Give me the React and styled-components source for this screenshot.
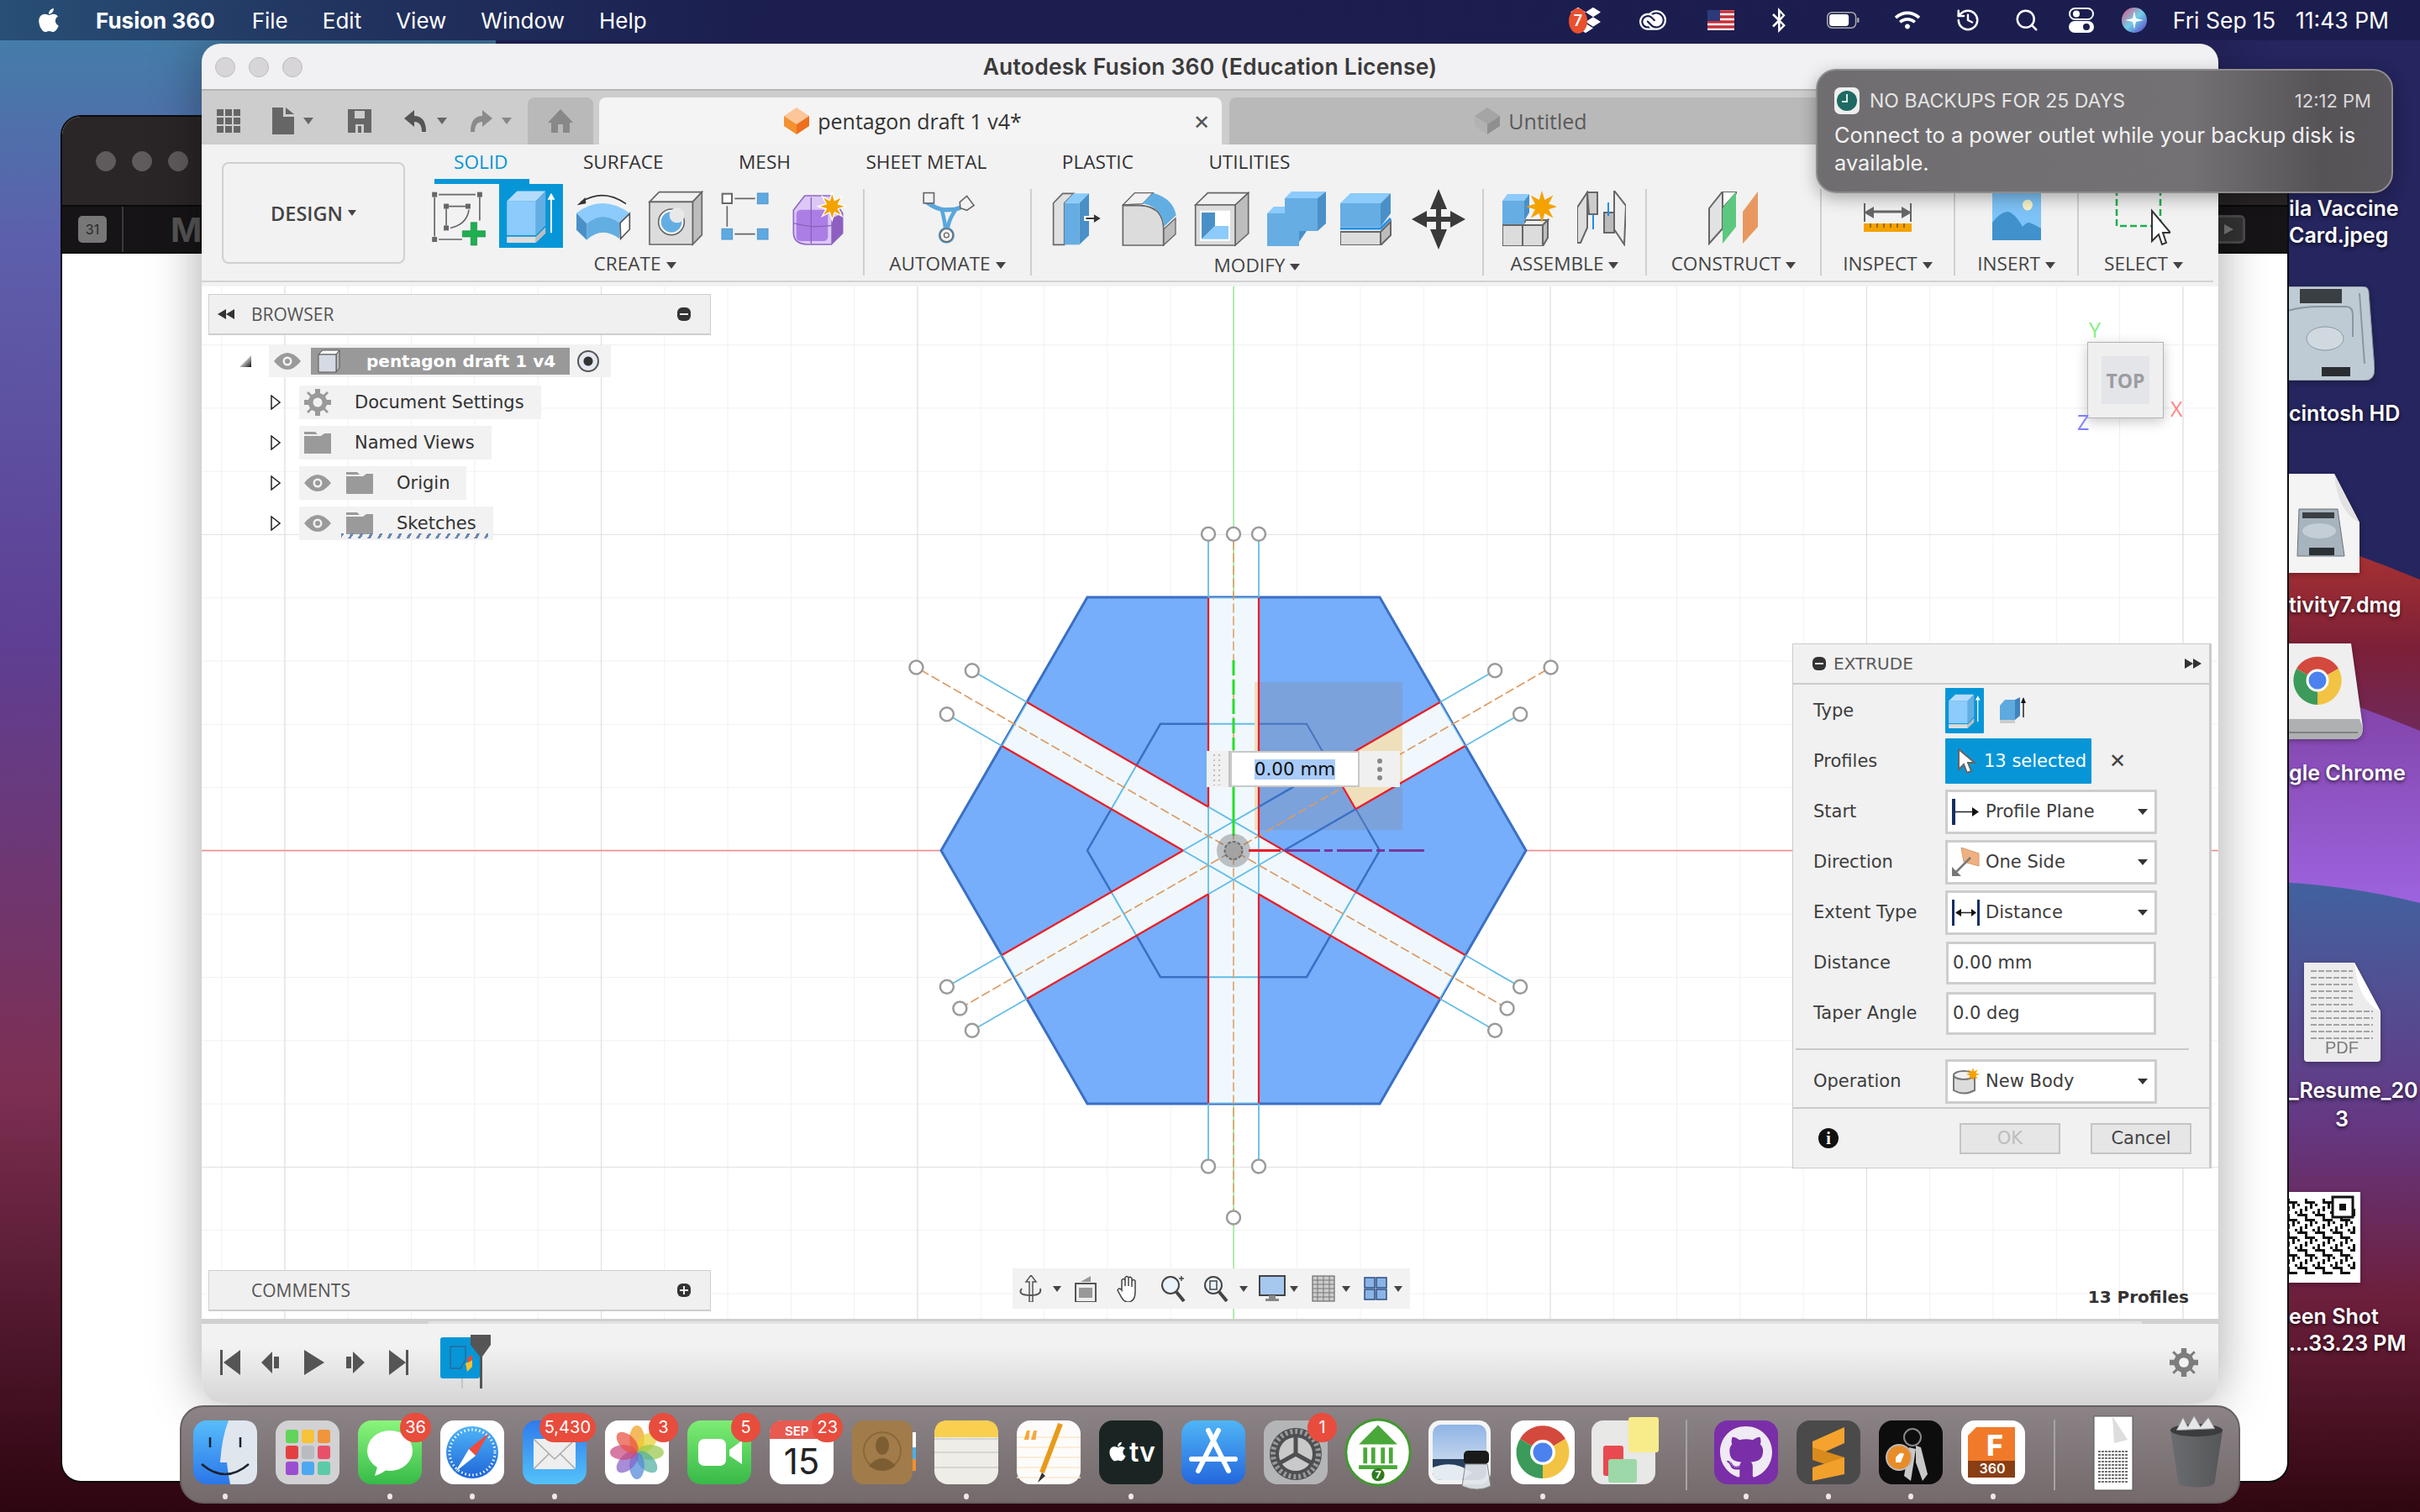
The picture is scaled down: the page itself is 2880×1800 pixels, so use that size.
import React from 'react';
import styled, { createGlobalStyle } from 'styled-components';
import { FaApple, FaDropbox, FaBluetoothB, FaWifi, FaGithub } from 'react-icons/fa';
import { SiAdobecreativecloud } from 'react-icons/si';
import { History, Search } from 'lucide-react';

const CX = 1468;
const CY = 1012.5;
const BLUE = '#3a6fc4';
const SKY = '#63bde6';
const RED = '#ee1c25';

// point on an arm of the sketch: angle in degrees, distance along it, offset from its axis
const pt = (deg, along, off = 0) => {
  const a = (deg * Math.PI) / 180;
  return [CX + along * Math.cos(a) - off * Math.sin(a), CY - along * Math.sin(a) - off * Math.cos(a)];
};
const poly = (points) => points.map((p) => p.map((v) => v.toFixed(1)).join(',')).join(' ');
const hexPoints = (r) => poly([0, 60, 120, 180, 240, 300].map((d) => pt(d, r)));

const Seg = ({ deg, from, to, off = 0, ...rest }) => {
  const [x1, y1] = pt(deg, from, off);
  const [x2, y2] = pt(deg, to, off);
  return <line x1={x1} y1={y1} x2={x2} y2={y2} {...rest} />;
};

const Handle = ({ deg, along, off = 0 }) => {
  const [cx, cy] = pt(deg, along, off);
  return <circle cx={cx} cy={cy} r="8" fill="#fff" stroke="#9b9b9b" strokeWidth="2.5" />;
};

const SketchDrawing = () => {
  const stripA = poly([pt(90, 301, 30), pt(90, 301, -30), pt(270, 301, 30), pt(270, 301, -30)]);
  const stripB = poly([pt(150, 301, 30), pt(150, 301, -30), pt(330, 301, 30), pt(330, 301, -30)]);
  const stripC = poly([pt(210, 301, 30), pt(210, 301, -30), pt(30, 52, 30), pt(30, 17.3, -30)]);
  const outerTR = poly([pt(30, 150.5, 30), pt(30, 301, 30), pt(30, 301, -30), pt(30, 150.5, -30)]);
  const cutA = pt(30, 150.5, -30);
  const cutB = pt(30, 150.5, 30);
  const strips = (
    <>
      <polygon points={stripA} />
      <polygon points={stripB} />
      <polygon points={stripC} />
      <polygon points={outerTR} />
    </>
  );
  const redProps = { stroke: RED, strokeWidth: 2.2 };
  const dash = { stroke: '#dd9a62', strokeWidth: 1.5, strokeDasharray: '11 4' };
  return (
    <SketchSvg viewBox="240 341 2400 1229">
      <defs>
        <clipPath id="stripClip">{strips}</clipPath>
        <clipPath id="boxClip">
          <rect x="1493" y="812" width="176" height="176" />
        </clipPath>
      </defs>
      <line x1="240" y1={CY} x2="2640" y2={CY} stroke="#f58a8a" strokeWidth="1.5" />
      <line x1={CX} y1="341" x2={CX} y2="1570" stroke="#9aee9a" strokeWidth="1.5" />
      <polygon points={hexPoints(348)} fill="#76aefb" stroke={BLUE} strokeWidth="3" />
      <polygon points={hexPoints(174)} fill="none" stroke={BLUE} strokeWidth="2.5" />
      <g fill="#f0f8fe">{strips}</g>
      <g clipPath="url(#stripClip)" fill="none" stroke={SKY} strokeWidth="2">
        <polygon points={hexPoints(174)} />
        <polygon points={hexPoints(348)} strokeWidth="3" />
      </g>
      <rect x="1493" y="812" width="176" height="176" fill="#7ba2db" />
      <g clipPath="url(#boxClip)">
        <polygon points={hexPoints(174)} fill="none" stroke="#4a74bd" strokeWidth="2" />
        <rect x="1493" y="812" width="5" height="176" fill="#efe0bb" />
        <polygon points={outerTR} fill="#efe0bb" />
      </g>
      {[90, 150, 210].map((deg) =>
        [-30, 30].map((off) => (
          <Seg key={deg + off} deg={deg} from={-376.6} to={376.6} off={off} stroke={SKY} strokeWidth="1.8" />
        ))
      )}
      <Seg deg={90} from={-437} to={376} {...dash} />
      <Seg deg={150} from={-376} to={436} {...dash} />
      <Seg deg={30} from={-376} to={436} {...dash} />
      <Seg deg={90} from={52} to={301} off={30} {...redProps} />
      <Seg deg={90} from={17.3} to={301} off={-30} {...redProps} />
      <Seg deg={270} from={52} to={301} off={30} {...redProps} />
      <Seg deg={270} from={52} to={301} off={-30} {...redProps} />
      <Seg deg={150} from={52} to={301} off={30} {...redProps} />
      <Seg deg={150} from={52} to={301} off={-30} {...redProps} />
      <Seg deg={210} from={52} to={301} off={30} {...redProps} />
      <Seg deg={210} from={52} to={301} off={-30} {...redProps} />
      <Seg deg={330} from={52} to={301} off={-30} {...redProps} />
      <Seg deg={330} from={17.3} to={301} off={30} {...redProps} />
      <Seg deg={30} from={150.5} to={301} off={30} {...redProps} />
      <Seg deg={30} from={150.5} to={301} off={-30} {...redProps} />
      <line x1={cutA[0]} y1={cutA[1]} x2={cutB[0]} y2={cutB[1]} {...redProps} />
      <Seg deg={30} from={52} to={150.5} off={30} stroke={BLUE} strokeWidth="2.5" />
      <Seg deg={30} from={52} to={150.5} off={-30} stroke={BLUE} strokeWidth="2.5" />
      <line x1={CX} y1="786" x2={CX} y2="893" stroke="#26e026" strokeWidth="3" strokeDasharray="18 5" />
      <line x1={CX} y1="937" x2={CX} y2="995" stroke="#26e026" strokeWidth="3" />
      <line x1="1486" y1={CY} x2="1524" y2={CY} stroke={RED} strokeWidth="3" />
      <line x1="1529" y1={CY} x2="1695" y2={CY} stroke="#77379e" strokeWidth="3" strokeDasharray="42 5 10 5" />
      <circle cx={CX} cy={CY} r="20" fill="#6a6a6a" fillOpacity=".4" />
      <circle cx={CX} cy={CY} r="10.5" fill="#a3a3a3" stroke="#6b6b6b" strokeWidth="2" strokeDasharray="4 2" />
      {[-30, 0, 30].map((x) => (
        <circle key={x} cx={CX + x} cy="635.8" r="8" fill="#fff" stroke="#9b9b9b" strokeWidth="2.5" />
      ))}
      <Handle deg={270} along={376} off={30} />
      <Handle deg={270} along={376} off={-30} />
      <Handle deg={270} along={437} />
      <Handle deg={150} along={436} />
      <Handle deg={30} along={436} />
      <Handle deg={210} along={376} />
      <Handle deg={330} along={376} />
      {[150, 30, 210, 330].map((deg) =>
        [-30, 30].map((off) => <Handle key={deg + off} deg={deg} along={376.6} off={off} />)
      )}
    </SketchSvg>
  );
};

/* ribbon icons: coordinates follow a 3x view of the toolbar */
const SketchIcon = () => (
  <svg width="75" height="68" viewBox="30 55 225 205">
    <g stroke="#666" strokeWidth="5" fill="none">
      <path d="M66 72H198M213 80V165M51 82V222M66 233H150M102 114H162M93 123V183M108 192Q168 178 174 126" />
    </g>
    <g fill="#666">
      {[[51, 72], [213, 72], [51, 233], [93, 114], [171, 114], [93, 192]].map(([x, y]) => (
        <rect key={x + y} x={x - 9} y={y - 9} width="18" height="18" />
      ))}
    </g>
    <path d="M181 172h22v30h30v22h-30v30h-22v-30h-30v-22h30z" fill="#1fae50" stroke="#1b8f45" strokeWidth="2" />
  </svg>
);
const ExtrudeCube = ({ size = 64 }) => (
  <svg width={size} height={size} viewBox="296 55 200 200">
    <path d="M306 100H414V227H306Z" fill="#8ccbfb" />
    <path d="M306 100L344 63H450L414 100Z" fill="#b3dcfc" />
    <path d="M414 100L450 63V190L414 227Z" fill="#62aee3" />
    <path d="M306 232H414V255H306Z" fill="#dcdcdc" />
    <path d="M414 232L450 197V220L414 255Z" fill="#bdbdbd" />
    <path d="M468 218V95H457L471 70L485 95H474V218Z" fill="#fff" />
  </svg>
);
const RevolveIcon = () => (
  <svg width="68" height="66" viewBox="552 60 204 198">
    <path d="M735 107Q655 50 575 100" fill="none" stroke="#333" strokeWidth="5" />
    <path d="M560 112L590 84L592 106Z" fill="#333" />
    <path d="M558 140Q650 70 748 140L712 175Q650 130 595 178Z" fill="#8ccbfb" />
    <path d="M595 178Q650 130 712 175V232Q650 185 595 236Z" fill="#62aee3" />
    <path d="M558 140L595 178V236L558 200Z" fill="#4a90c8" />
    <path d="M714 175L748 142V198L716 232Z" fill="#fff" stroke="#555" strokeWidth="5" />
  </svg>
);
const HoleIcon = () => (
  <svg width="66" height="66" viewBox="812 60 198 198">
    <path d="M818 100L852 65H1005L972 100Z" fill="#f1f1f1" stroke="#666" strokeWidth="5" />
    <path d="M972 100L1005 65V218L972 252Z" fill="#bdbdbd" stroke="#666" strokeWidth="5" />
    <path d="M818 100H972V252H818Z" fill="#dcdcdc" stroke="#666" strokeWidth="5" />
    <circle cx="896" cy="172" r="46" fill="#fff" stroke="#666" strokeWidth="5" />
    <circle cx="896" cy="172" r="37" fill="#62aee3" />
    <circle cx="916" cy="148" r="27" fill="#e8e8e8" />
  </svg>
);
const PatternIcon = () => (
  <svg width="60" height="64" viewBox="1070 70 180 192">
    <path d="M1122 95H1195M1095 122V195M1122 222H1195" stroke="#666" strokeWidth="5" />
    <rect x="1078" y="78" width="34" height="34" fill="#fff" stroke="#666" strokeWidth="6" />
    {[[1203, 76], [1076, 203], [1203, 203]].map(([x, y]) => (
      <rect key={x + y} x={x} y={y} width="38" height="38" fill="#5eaae0" stroke="#4d93cc" strokeWidth="3" />
    ))}
  </svg>
);
const Burst = ({ cx, cy, r = 48, border = '#fff' }) => {
  const points = Array.from({ length: 16 }, (_, i) => {
    const a = (i * Math.PI) / 8;
    const d = i % 2 ? r * 0.46 : r;
    return [cx + d * Math.sin(a), cy - d * Math.cos(a)];
  });
  return <polygon points={poly(points)} fill="#f4a200" stroke={border} strokeWidth="4" />;
};
const FormIcon = () => (
  <svg width="66" height="66" viewBox="1328 60 198 198">
    <path d="M1335 130L1375 78H1470L1510 140V212L1470 252H1385Q1335 250 1335 210Z" fill="#dcc8f7" stroke="#9066c4" strokeWidth="5" />
    <path d="M1345 146Q1345 128 1363 128H1440Q1458 128 1458 146V222Q1458 240 1440 240H1363Q1345 240 1345 222Z" fill="#ab7ee6" />
    <path d="M1470 160L1510 140V212L1470 250Z" fill="#8e5fc0" />
    <path d="M1398 84V250M1335 176Q1420 200 1510 176" fill="none" stroke="#8a62b8" strokeWidth="4" />
    <Burst cx={1473} cy={116} r={50} />
  </svg>
);
const AutomateIcon = () => (
  <svg width="66" height="66" viewBox="158 58 204 204">
    <path d="M182 100Q225 132 262 128Q305 130 328 104" fill="none" stroke="#5aa6dc" strokeWidth="16" />
    <path d="M238 128Q250 175 252 205M290 126Q262 165 258 205" fill="none" stroke="#5aa6dc" strokeWidth="14" />
    <rect x="171" y="66" width="38" height="38" fill="#f2f2f2" stroke="#666" strokeWidth="5" />
    <path d="M304 100L330 78L356 112L330 130L306 122Z" fill="#f2f2f2" stroke="#666" strokeWidth="5" />
    <circle cx="255" cy="222" r="30" fill="#5aa6dc" />
    <circle cx="255" cy="222" r="24" fill="#f2f2f2" stroke="#666" strokeWidth="5" />
    <circle cx="255" cy="222" r="9" fill="none" stroke="#666" strokeWidth="4" />
  </svg>
);
const PressPullIcon = () => (
  <svg width="60" height="66" viewBox="630 60 184 198">
    <path d="M638 100L672 65H712L678 100V252H638Z" fill="#e0e0e0" stroke="#666" strokeWidth="5" />
    <path d="M678 100H733V252H678Z" fill="#66ade3" />
    <path d="M678 100L712 65H768L733 100Z" fill="#8ccbfb" />
    <path d="M733 100L768 65V218L733 252Z" fill="#4a90c8" />
    <rect x="750" y="147" width="40" height="18" fill="#fff" />
    <path d="M757 156H790" stroke="#333" strokeWidth="6" />
    <path d="M786 141L810 156L786 171Z" fill="#333" />
  </svg>
);
const FilletIcon = () => (
  <svg width="66" height="66" viewBox="886 60 198 198">
    <path d="M1035 195L1078 155V212L1035 252Z" fill="#bdbdbd" stroke="#666" strokeWidth="4" />
    <path d="M890 108L932 65H998L960 104Z" fill="#f1f1f1" stroke="#666" strokeWidth="4" />
    <path d="M890 110H950Q1032 112 1035 190V252H890Z" fill="#dcdcdc" stroke="#666" strokeWidth="5" />
    <path d="M960 102L998 65Q1070 85 1080 145L1037 185Q1030 115 960 102Z" fill="#62aee3" />
  </svg>
);
const ShellIcon = () => (
  <svg width="66" height="66" viewBox="1143 60 198 198">
    <path d="M1148 108L1192 65H1337L1290 108Z" fill="#f1f1f1" stroke="#666" strokeWidth="5" />
    <path d="M1290 108L1337 65V210L1290 252Z" fill="#bdbdbd" stroke="#666" strokeWidth="5" />
    <path d="M1148 108H1290V252H1148Z" fill="#dcdcdc" stroke="#666" strokeWidth="5" />
    <rect x="1164" y="128" width="108" height="108" fill="#fff" />
    <path d="M1170 135H1218V183L1170 230Z" fill="#4a90c8" />
    <path d="M1218 183H1266V230H1170Z" fill="#8ccbfb" />
  </svg>
);
const CombineIcon = () => (
  <svg width="72" height="66" viewBox="0 0 72 66">
    <path d="M0 26H21V8H60V47H38V65H0Z" fill="#66ade3" />
    <path d="M0 26L8 18H21V26ZM21 8L29 0H70L60 8Z" fill="#8ccbfb" />
    <path d="M60 8L70 0V38L60 47ZM38 47H47L38 60Z" fill="#4a90c8" />
  </svg>
);
const StackIcon = () => (
  <svg width="62" height="62" viewBox="0 0 62 62">
    <path d="M0 12H48V40H0Z" fill="#66ade3" />
    <path d="M0 12L12 0H60L48 12Z" fill="#8ccbfb" />
    <path d="M48 12L60 0V24L48 40Z" fill="#4a90c8" />
    <path d="M0 42H48L60 30" fill="none" stroke="#1e90e8" strokeWidth="3" />
    <path d="M0 46H48V62H0Z" fill="#dcdcdc" stroke="#666" strokeWidth="2" />
    <path d="M48 46L60 34V50L48 62Z" fill="#bdbdbd" stroke="#666" strokeWidth="2" />
  </svg>
);
const MoveIcon = () => (
  <svg width="64" height="72" viewBox="0 0 64 72">
    <path d="M32 0L42 24H35V33H46V26L64 36L46 46V39H35V48H42L32 72L22 48H29V39H18V46L0 36L18 26V33H29V24H22Z" fill="#3a3a3a" />
  </svg>
);
const NewComponentIcon = () => (
  <svg width="64" height="66" viewBox="0 0 64 66">
    <path d="M0 41H24V66H0ZM24 41H48V66H24Z" fill="#dcdcdc" stroke="#666" strokeWidth="2" />
    <path d="M24 41L28 35H54L48 41Z" fill="#f1f1f1" stroke="#666" strokeWidth="2" />
    <path d="M48 41L54 35V56L48 66Z" fill="#bdbdbd" stroke="#666" strokeWidth="2" />
    <path d="M0 12H26V40H0Z" fill="#66ade3" />
    <path d="M0 12L6 4H32L26 12Z" fill="#8ccbfb" />
    <path d="M26 12L32 4V26L26 36Z" fill="#4a90c8" />
    <Burst cx={47} cy={19} r={19} border="none" />
  </svg>
);
const JointIcon = () => (
  <svg width="58" height="66" viewBox="0 0 58 66">
    <path d="M0 20L12 2V44L4 62H0Z" fill="#ddd" stroke="#666" strokeWidth="2" />
    <path d="M12 2H24V28H14Z" fill="#ccc" stroke="#666" strokeWidth="2" />
    <path d="M58 18L44 0V46L56 64Z" fill="#eee" stroke="#666" strokeWidth="2" />
    <path d="M32 26H44V50H32Z" fill="#bbb" stroke="#666" strokeWidth="2" />
    <path d="M37 14V30M19 28V46" stroke="#1e90e8" strokeWidth="2" />
  </svg>
);
const PlaneIcon = () => (
  <svg width="62" height="64" viewBox="0 0 62 64">
    <path d="M2 20L18 0V44L2 62Z" fill="#e2e2e2" stroke="#666" strokeWidth="2" />
    <path d="M18 0H34V2L18 20Z" fill="#fff" stroke="#666" strokeWidth="2" />
    <path d="M18 20L34 0V42L18 62Z" fill="#5cc87f" />
    <path d="M42 24L60 0V42L42 62Z" fill="#e8985f" />
  </svg>
);
const MeasureIcon = () => (
  <svg width="58" height="34" viewBox="0 0 58 34">
    <path d="M1 0V22M56 0V22" stroke="#666" strokeWidth="2" />
    <path d="M8 10H50" stroke="#666" strokeWidth="3" />
    <path d="M0 11L12 4V18ZM57 11L45 4V18Z" fill="#666" />
    <rect x="0" y="24" width="57" height="10" fill="#f4a200" />
    <path d="M8 24V29M16 24V29M24 24V29M32 24V29M40 24V29M48 24V29" stroke="#7a5a10" strokeWidth="1.5" />
  </svg>
);
const PictureIcon = () => (
  <svg width="58" height="61" viewBox="0 0 58 61">
    <rect width="58" height="61" fill="#7dc3f7" />
    <ellipse cx="42" cy="19" rx="6" ry="6.5" fill="#f8f4c8" />
    <path d="M0 40Q10 27 19 27Q28 30 36 45Q40 40 44 40Q50 42 58 47V61H0Z" fill="#4192cc" />
  </svg>
);
const SelectIcon = () => (
  <svg width="66" height="66" viewBox="0 0 66 66">
    <rect x="2" y="-10" width="52" height="52" fill="none" stroke="#1fae50" strokeWidth="2.5" strokeDasharray="8 4" />
    <path d="M44 24V60L52 52L56 64L61 62L57 50H66Z" fill="#fff" stroke="#333" strokeWidth="2" />
  </svg>
);

/* toolbar in the tab strip */
const GridGlyph = () => (
  <svg width="28" height="28" viewBox="0 0 28 28" fill="#666">
    {[0, 10, 20].map((x) => [0, 10, 20].map((y) => <rect key={x + y * 3} x={x} y={y} width="8" height="8" />))}
  </svg>
);
const FileGlyph = () => (
  <svg width="26" height="32" viewBox="0 0 26 32">
    <path d="M0 0H13V11H26V32H0ZM16 0L26 8H16Z" fill="#666" />
  </svg>
);
const SaveGlyph = () => (
  <svg width="28" height="28" viewBox="0 0 28 28">
    <path d="M0 0H28V28H0Z" fill="#666" />
    <rect x="8" y="2" width="12" height="9" fill="#cdcdcd" />
    <rect x="9" y="18" width="10" height="10" fill="#cdcdcd" />
    <rect x="12" y="20" width="4" height="8" fill="#666" />
  </svg>
);
const UndoGlyph = ({ $flip, color = '#555' }) => (
  <svg width="28" height="26" viewBox="0 0 28 26" style={$flip ? { transform: 'scaleX(-1)' } : undefined}>
    <path d="M0 10L12 0V7Q26 7 26 26H21Q21 14 12 14V20Z" fill={color} />
  </svg>
);
const HomeGlyph = () => (
  <svg width="30" height="28" viewBox="0 0 30 28">
    <path d="M15 0L30 16H26V28H18V18H12V28H4V16H0Z" fill="#888" />
  </svg>
);
const DocCube = ({ a = '#fcc69a', b = '#f39130', c = '#ee6f1c' }) => (
  <svg width="30" height="32" viewBox="0 0 30 32">
    <path d="M15 0L30 10L15 20L0 10Z" fill={a} />
    <path d="M0 10L15 20V32L0 22Z" fill={b} />
    <path d="M30 10L15 20V32L30 22Z" fill={c} />
  </svg>
);
const Caret = styled.span`
  display: inline-block;
  width: 0;
  height: 0;
  margin-left: ${({ $gap }) => $gap ?? 6}px;
  border-left: ${({ $size }) => $size ?? 6}px solid transparent;
  border-right: ${({ $size }) => $size ?? 6}px solid transparent;
  border-top: ${({ $size }) => ($size ?? 6) + 2}px solid ${({ $color }) => $color ?? '#444'};
`;

/* small browser and panel glyphs */
const Eye = () => (
  <svg width="32" height="20" viewBox="0 0 32 20">
    <path d="M0 10Q16 -10 32 10Q16 30 0 10Z" fill="#9a9a9a" />
    <circle cx="16" cy="10" r="5.5" fill="#f2f2f2" />
    <circle cx="16" cy="10" r="3" fill="#9a9a9a" />
  </svg>
);
const Folder = () => (
  <svg width="32" height="26" viewBox="0 0 32 26">
    <path d="M0 0H13L16 3H0ZM0 5H20L24 2H32V26H0Z" fill="#9a9a9a" />
  </svg>
);
const Gear = ({ size = 32, color = '#9a9a9a' }) => (
  <svg width={size} height={size} viewBox="0 0 32 32">
    <path d="M13 0H19V5L23 7L27 3L29 5L25 9L27 13H32V19H27L25 23L29 27L27 29L23 25L19 27V32H13V27L9 25L5 29L3 27L7 23L5 19H0V13H5L7 9L3 5L5 3L9 7L13 5Z" fill={color} />
    <circle cx="16" cy="16" r="5.5" fill="#f2f2f2" />
  </svg>
);
const TreeArrow = () => (
  <svg width="12" height="18" viewBox="0 0 12 18">
    <path d="M1 1L11 9L1 17Z" fill="#fff" stroke="#222" strokeWidth="1.5" />
  </svg>
);
const Pill = ({ plus }) => (
  <svg width="16" height="16" viewBox="0 0 16 16">
    <rect width="16" height="16" rx="6" fill="#333" />
    <path d={plus ? 'M3 8H13M8 3V13' : 'M3 8H13'} stroke="#eee" strokeWidth="2" />
  </svg>
);
const DoubleArrow = ({ back }) => (
  <svg width="20" height="12" viewBox="0 0 20 12" style={back ? { transform: 'scaleX(-1)' } : undefined}>
    <path d="M0 0L10 6L0 12ZM10 0L20 6L10 12Z" fill="#333" />
  </svg>
);

const StartGlyph = () => (
  <svg width="34" height="31" viewBox="0 0 34 31">
    <rect x="0" width="4" height="31" fill="#152e63" />
    <path d="M4 15.5H26" stroke="#222" strokeWidth="1.5" />
    <path d="M24 10L32 15.5L24 21Z" fill="#111" />
  </svg>
);
const DirectionGlyph = () => (
  <svg width="34" height="34" viewBox="0 0 34 34">
    <path d="M11 0L32 7V22L14 17Z" fill="#eeb081" stroke="#d99a6a" />
    <path d="M2 32L22 12" stroke="#777" strokeWidth="2.5" />
    <path d="M0 34V23L11 34Z" fill="#777" />
  </svg>
);
const DistanceGlyph = () => (
  <svg width="34" height="31" viewBox="0 0 34 31">
    <rect x="0" width="3" height="31" fill="#152e63" />
    <rect x="30" width="3" height="31" fill="#152e63" />
    <path d="M6 15.5H27" stroke="#222" strokeWidth="1.5" />
    <path d="M11 11L4 15.5L11 20ZM23 11L29 15.5L23 20Z" fill="#111" />
  </svg>
);
const BodyGlyph = () => (
  <svg width="34" height="32" viewBox="0 0 34 32">
    <path d="M2 9V27Q14 34 27 27V9" fill="#dcdcdc" stroke="#777" strokeWidth="2" />
    <ellipse cx="14" cy="9" rx="12" ry="5" fill="#f1f1f1" stroke="#777" strokeWidth="2" />
    <Burst cx={25} cy={8} r={8} border="none" />
  </svg>
);
const CursorGlyph = () => (
  <svg width="24" height="30" viewBox="0 0 24 30">
    <path d="M2 1V25L8 19L12 29L17 27L13 17H21Z" fill="#fff" stroke="#666" strokeWidth="2" />
  </svg>
);
const TaperGlyph = () => (
  <svg width="32" height="32" viewBox="0 0 32 32">
    <path d="M0 10L6 3H18V27H6L0 30Z" fill="#5eaae0" />
    <path d="M18 3L24 0V22L18 27Z" fill="#3f83bd" />
    <path d="M0 27H18V31H0Z" fill="#ccc" />
    <path d="M28 24V6" stroke="#222" strokeWidth="1.5" />
    <path d="M25 7L28 0L31 7Z" fill="#111" />
  </svg>
);

/* navigation bar at the bottom of the canvas */
const OrbitGlyph = () => (
  <svg width="30" height="32" viewBox="0 0 30 32">
    <path d="M15 0L21 8H17V32H13V8H9Z" fill="#eee" stroke="#555" strokeWidth="1.5" />
    <path d="M4 16Q-2 24 15 24Q28 24 26 16" fill="none" stroke="#555" strokeWidth="2" />
  </svg>
);
const LookGlyph = () => (
  <svg width="28" height="32" viewBox="0 0 28 32">
    <path d="M2 10H26V32H2Z" fill="#eee" stroke="#555" strokeWidth="2" />
    <rect x="6" y="15" width="16" height="12" fill="#999" />
    <path d="M8 8L20 1V8Z" fill="#999" />
  </svg>
);
const HandGlyph = () => (
  <svg width="30" height="32" viewBox="0 0 30 32">
    <path d="M6 16V6Q8 3 10 6V13V3Q12 0 14 3V13V3Q16 1 18 4V14V7Q20 4 22 7V20Q22 32 13 32Q9 32 6 27L1 18Q3 14 6 18Z" fill="#fff" stroke="#444" strokeWidth="1.5" />
  </svg>
);
const ZoomGlyph = ({ fit }) => (
  <svg width="30" height="32" viewBox="0 0 30 32">
    <circle cx="12" cy="12" r="10" fill="#eaf2fb" stroke="#444" strokeWidth="2" />
    <path d="M19 20L28 31" stroke="#444" strokeWidth="4" />
    {fit ? <rect x="8" y="7" width="8" height="10" fill="none" stroke="#444" strokeWidth="1.5" /> : <path d="M25 1V7M22 4H28" stroke="#444" strokeWidth="1.5" />}
  </svg>
);
const DisplayGlyph = () => (
  <svg width="32" height="32" viewBox="0 0 32 32">
    <rect x="1" y="1" width="30" height="23" fill="#a6c8ee" stroke="#444" strokeWidth="2" />
    <path d="M12 24H20V28H24V31H8V28H12Z" fill="#888" />
  </svg>
);
const GridStackGlyph = () => (
  <svg width="28" height="32" viewBox="0 0 28 32">
    <rect x="1" y="1" width="26" height="30" fill="#ccc" stroke="#555" />
    <path d="M1 6H27M1 11H27M1 16H27M1 21H27M1 26H27M7 1V31M14 1V31M21 1V31" stroke="#777" />
  </svg>
);
const PanesGlyph = () => (
  <svg width="28" height="28" viewBox="0 0 28 28">
    <rect x="1" y="1" width="12" height="12" fill="#8ab4e4" stroke="#2c4f86" strokeWidth="1.5" />
    <rect x="15" y="1" width="12" height="12" fill="#8ab4e4" stroke="#2c4f86" strokeWidth="1.5" />
    <rect x="1" y="15" width="12" height="12" fill="#8ab4e4" stroke="#2c4f86" strokeWidth="1.5" />
    <rect x="15" y="15" width="12" height="12" fill="#8ab4e4" stroke="#2c4f86" strokeWidth="1.5" />
  </svg>
);

/* dock tiles */
const Grad = ({ id, a, b, x2 = 0, y2 = 1 }) => (
  <linearGradient id={id} x1="0" y1="0" x2={x2} y2={y2}>
    <stop offset="0" stopColor={a} />
    <stop offset="1" stopColor={b} />
  </linearGradient>
);
const Tile = ({ children, fill = '#fff' }) => (
  <svg width="76" height="76" viewBox="0 0 76 76">
    <rect width="76" height="76" rx="16" fill={fill} />
    {children}
  </svg>
);
const FinderTile = () => (
  <svg width="76" height="76" viewBox="0 0 76 76">
    <defs><Grad id="fd" a="#58bdfb" b="#2a76e8" /></defs>
    <rect width="76" height="76" rx="16" fill="url(#fd)" />
    <path d="M42 0H60Q76 0 76 16V60Q76 76 60 76H44Q41 60 40 50H32Q34 20 42 0Z" fill="#dfe6ee" />
    <path d="M20 20V32M56 20V32" stroke="#1a2230" strokeWidth="2.5" />
    <path d="M10 52Q38 76 66 52" fill="none" stroke="#1a2230" strokeWidth="2.5" />
  </svg>
);
const LaunchpadTile = () => {
  const colors = ['#62d45a', '#f7c338', '#f0953c', '#e24040', '#b8bcc0', '#e8506a', '#9a4fd0', '#4ca8f0', '#5cc9a8'];
  return (
    <Tile fill="#d2d1d3">
      {colors.map((c, i) => (
        <rect key={c} x={12 + (i % 3) * 19} y={11 + Math.floor(i / 3) * 19} width="15" height="16" rx="3" fill={c} />
      ))}
    </Tile>
  );
};
const MessagesTile = () => (
  <svg width="76" height="76" viewBox="0 0 76 76">
    <defs><Grad id="ms" a="#8af57c" b="#36bb48" /></defs>
    <rect width="76" height="76" rx="16" fill="url(#ms)" />
    <ellipse cx="38" cy="36" rx="27" ry="24" fill="#fff" />
    <path d="M24 52L20 66Q32 62 36 56Z" fill="#fff" />
  </svg>
);
const SafariTile = () => (
  <Tile>
    <defs><Grad id="sf" a="#4fb4f7" b="#1f66d8" /></defs>
    <circle cx="38" cy="38" r="31" fill="url(#sf)" />
    <circle cx="38" cy="38" r="27" fill="none" stroke="#fff" strokeWidth="3" strokeDasharray="1.5 3" />
    <path d="M58 15L34 34L42 42Z" fill="#f04a3a" />
    <path d="M18 61L34 34L42 42Z" fill="#fff" />
  </Tile>
);
const MailTile = () => (
  <svg width="76" height="76" viewBox="0 0 76 76">
    <defs><Grad id="ml" a="#2f7bec" b="#53c2fa" /></defs>
    <rect width="76" height="76" rx="16" fill="url(#ml)" />
    <rect x="13" y="22" width="50" height="36" rx="2" fill="#eee" />
    <path d="M13 22L38 46L63 22M13 58L31 40M63 58L45 40" fill="none" stroke="#aaa" strokeWidth="1.5" />
  </svg>
);
const PhotosTile = () => {
  const petals = ['#f0a020', '#e8d030', '#98c848', '#50b0a0', '#5088d8', '#8860c8', '#c84880', '#e85040'];
  return (
    <Tile>
      {petals.map((c, i) => (
        <ellipse key={c} cx="38" cy="22" rx="9" ry="16" fill={c} fillOpacity=".72" transform={`rotate(${i * 45} 38 38)`} />
      ))}
    </Tile>
  );
};
const FaceTimeTile = () => (
  <svg width="76" height="76" viewBox="0 0 76 76">
    <defs><Grad id="ft" a="#7ded74" b="#38b948" /></defs>
    <rect width="76" height="76" rx="16" fill="url(#ft)" />
    <rect x="13" y="22" width="33" height="32" rx="7" fill="#fff" />
    <path d="M50 35L65 24V52L50 42Z" fill="#fff" />
  </svg>
);
const CalendarTile = () => (
  <Tile>
    <path d="M0 22V16Q0 0 16 0H60Q76 0 76 16V22Z" fill="#e85a50" />
    <TileText x="18" y="18" fontSize="15" fill="#fff" fontWeight="600">SEP</TileText>
    <TileText x="38" y="64" fontSize="42" fill="#222" textAnchor="middle">15</TileText>
  </Tile>
);
const ContactsTile = () => (
  <svg width="76" height="76" viewBox="0 0 76 76">
    <rect x="70" y="14" width="6" height="18" fill="#fff" />
    <rect x="70" y="32" width="6" height="14" fill="#4cb0e8" />
    <rect x="70" y="46" width="6" height="14" fill="#f09030" />
    <rect width="72" height="76" rx="14" fill="#a17c4a" />
    <circle cx="36" cy="36" r="22" fill="none" stroke="#8a6838" strokeWidth="2" />
    <ellipse cx="36" cy="30" rx="8" ry="11" fill="#7d5e32" />
    <path d="M20 54Q36 36 52 54Q36 66 20 54Z" fill="#7d5e32" />
  </svg>
);
const NotesTile = () => (
  <Tile fill="#eeede8">
    <path d="M0 20V16Q0 0 16 0H60Q76 0 76 16V20Z" fill="#f8cf4f" />
    <path d="M0 22H76" stroke="#bbb" strokeDasharray="1 1" strokeWidth="2" />
    <path d="M0 38H76M0 56H76" stroke="#d6d6d0" strokeWidth="2" />
  </Tile>
);
const PagesTile = () => (
  <Tile fill="#fdfcfa">
    <path d="M0 20H76M0 32H76M0 44H76M0 56H76M0 68H76" stroke="#fbe6cc" strokeWidth="1.5" />
    <TileText x="6" y="38" fontSize="36" fill="#f3a93a" fontWeight="700">“</TileText>
    <path d="M52 4L30 62" stroke="#e89a1a" strokeWidth="6" />
    <path d="M30 62L25 74L34 66Z" fill="#333" />
  </Tile>
);
const TvTile = () => (
  <Tile fill="#1a2523">
    <FaApple x="9" y="24" size="26" color="#fff" />
    <TileText x="36" y="49" fontSize="32" fill="#fff" fontWeight="600">tv</TileText>
  </Tile>
);
const StoreTile = () => (
  <svg width="76" height="76" viewBox="0 0 76 76">
    <defs><Grad id="as" a="#4fb5f6" b="#2467dd" /></defs>
    <rect width="76" height="76" rx="16" fill="url(#as)" />
    <path d="M44 12L20 60M32 12L56 60M12 46H64" stroke="#fff" strokeWidth="6" strokeLinecap="round" />
  </svg>
);
const PrefsTile = () => (
  <Tile fill="#b4b5b7">
    <circle cx="38" cy="40" r="31" fill="#4e4f52" />
    <circle cx="38" cy="40" r="27" fill="none" stroke="#9a9a9a" strokeWidth="6" strokeDasharray="3 3" />
    <circle cx="38" cy="40" r="20" fill="#c9c9c9" />
    <path d="M38 40V20M38 40L20 50M38 40L56 50" stroke="#4e4f52" strokeWidth="5" />
  </Tile>
);
const BankTile = () => (
  <svg width="80" height="82" viewBox="0 0 84 84">
    <ellipse cx="42" cy="42" rx="40" ry="41" fill="#fff" stroke="#3f9a2e" strokeWidth="3" />
    <path d="M42 8L66 32H18Z" fill="#4aa83a" />
    <path d="M26 36V56M36 36V56M48 36V56M58 36V56" stroke="#4aa83a" strokeWidth="5" />
    <path d="M18 58H66V63H18Z" fill="#4aa83a" />
    <circle cx="42" cy="70" r="8" fill="#2e7a20" />
    <TileText x="42" y="75" fontSize="13" fill="#fff" textAnchor="middle" fontWeight="700">7</TileText>
  </svg>
);
const PreviewTile = () => (
  <svg width="76" height="84" viewBox="0 0 76 84">
    <defs><Grad id="pv" a="#8fb4e6" b="#e0e8f0" /></defs>
    <rect width="74" height="76" rx="14" fill="#f4f4f4" />
    <rect x="5" y="5" width="64" height="66" rx="10" fill="url(#pv)" />
    <path d="M5 46H69V60Q69 71 58 71H16Q5 71 5 60Z" fill="#28405f" />
    <path d="M5 56Q30 46 52 62L40 71H16Q5 71 5 62Z" fill="#e4ecf2" />
    <rect x="42" y="36" width="30" height="16" rx="5" fill="#1a1a1a" />
    <path d="M44 52H70L74 78Q58 86 40 78Z" fill="#dfe5ea" fillOpacity=".92" stroke="#888" />
  </svg>
);
const ChromeTile = () => (
  <Tile>
    <path d="M38 38L11 22A31 31 0 0 1 65 22Z" fill="#d4493e" />
    <path d="M38 38L11 22A31 31 0 0 0 38 69Z" fill="#3c9a5a" />
    <path d="M38 38L38 69A31 31 0 0 0 65 22Z" fill="#f3c343" />
    <circle cx="38" cy="38" r="15" fill="#fff" />
    <circle cx="38" cy="38" r="11.5" fill="#4b82ee" />
  </Tile>
);
const StickiesTile = () => (
  <svg width="80" height="80" viewBox="0 0 80 80">
    <rect y="4" width="76" height="76" rx="14" fill="#e8e8e6" />
    <rect x="14" y="34" width="24" height="36" rx="3" fill="#e84a50" />
    <rect x="20" y="50" width="34" height="28" rx="3" fill="#9cd8a8" />
    <rect x="44" y="0" width="36" height="42" rx="3" fill="#f8ec8a" />
  </svg>
);
const GithubTile = () => (
  <Tile fill="#7a2ea8">
    <FaGithub x="6" y="6" size="64" color="#f0eaf4" />
  </Tile>
);
const SublimeTile = () => (
  <Tile fill="#4a4a4a">
    <path d="M57 8V27L19 44V25Z" fill="#f5a32e" />
    <path d="M19 32L57 44V60L19 47Z" fill="#d98a1c" />
    <path d="M57 44V64L19 72V56Z" fill="#f2a02c" />
  </Tile>
);
const KeysTile = () => (
  <Tile fill="#0d0d0d">
    <circle cx="40" cy="20" r="10" fill="none" stroke="#888" strokeWidth="2" />
    <path d="M44 30L50 32L58 64L52 72L44 50ZM36 32L44 34L38 72L30 66Z" fill="#c8c8c8" />
    <circle cx="24" cy="44" r="15" fill="#e88c2a" stroke="#bbb" strokeWidth="2" />
    <path d="M20 44Q26 36 30 40L26 50H20Z" fill="#fff" />
  </Tile>
);
const FusionTile = () => (
  <Tile>
    <path d="M8 18L18 8H64V48H8Z" fill="#f07a2a" />
    <path d="M8 48H64V68H8Z" fill="#8a3e14" />
    <TileText x="40" y="42" fontSize="34" fill="#fff" fontWeight="800" textAnchor="middle">F</TileText>
    <TileText x="37" y="63" fontSize="16" fill="#fff" fontWeight="600" textAnchor="middle">360</TileText>
  </Tile>
);
const PdfPageTile = () => (
  <svg width="48" height="90" viewBox="0 0 48 90">
    <path d="M0 2H46V90H0Z" fill="#fff" stroke="#555" />
    <path d="M22 2L40 30L24 34Z" fill="#ddd" />
    <g stroke="#444" strokeWidth="1.5" strokeDasharray="3 1">
      {[44, 48, 52, 56, 60, 64, 68, 72, 76, 80].map((y) => <path key={y} d={`M5 ${y}H41`} />)}
    </g>
  </svg>
);
const TrashTile = () => (
  <svg width="66" height="90" viewBox="0 0 70 92">
    <defs><Grad id="tr" a="#6a6d70" b="#555658" x2={1} y2={0} /></defs>
    <path d="M2 18H68L58 84Q56 90 36 90Q14 90 12 84Z" fill="url(#tr)" />
    <ellipse cx="35" cy="18" rx="33" ry="8" fill="#3b3c3e" />
    <path d="M10 18L18 2L24 14L32 0L40 14L50 2L58 16Z" fill="#e4e6ea" stroke="#999" />
  </svg>
);

const DOCK = [
  { id: 'finder', Icon: FinderTile, dot: true },
  { id: 'launchpad', Icon: LaunchpadTile },
  { id: 'messages', Icon: MessagesTile, dot: true, badge: '36' },
  { id: 'safari', Icon: SafariTile, dot: true },
  { id: 'mail', Icon: MailTile, dot: true, badge: '5,430' },
  { id: 'photos', Icon: PhotosTile, badge: '3' },
  { id: 'facetime', Icon: FaceTimeTile, badge: '5' },
  { id: 'calendar', Icon: CalendarTile, badge: '23' },
  { id: 'contacts', Icon: ContactsTile },
  { id: 'notes', Icon: NotesTile, dot: true },
  { id: 'pages', Icon: PagesTile },
  { id: 'tv', Icon: TvTile, dot: true },
  { id: 'store', Icon: StoreTile },
  { id: 'prefs', Icon: PrefsTile, badge: '1' },
  { id: 'bank', Icon: BankTile, lift: 3 },
  { id: 'preview', Icon: PreviewTile },
  { id: 'chrome', Icon: ChromeTile, dot: true },
  { id: 'stickies', Icon: StickiesTile, lift: 4 },
  { sep: true },
  { id: 'github', Icon: GithubTile, dot: true },
  { id: 'sublime', Icon: SublimeTile, dot: true },
  { id: 'keys', Icon: KeysTile, dot: true },
  { id: 'fusion', Icon: FusionTile, dot: true },
  { sep: true },
  { id: 'pdf', Icon: PdfPageTile, lift: 7 },
  { id: 'trash', Icon: TrashTile, lift: 7 },
];

const RIBBON_TABS = ['SOLID', 'SURFACE', 'MESH', 'SHEET METAL', 'PLASTIC', 'UTILITIES'];

const App = () => {
  return (
    <Desktop>
      <GlobalStyle />
      <Wallpaper viewBox="0 0 2880 1800" preserveAspectRatio="none">
        <defs>
          <linearGradient id="wallLeft" x1="0" y1="0" x2="0" y2="1">
            <stop offset="0" stopColor="#3f83a8" />
            <stop offset=".16" stopColor="#5d5fac" />
            <stop offset=".42" stopColor="#5e3f94" />
            <stop offset=".72" stopColor="#7d2f52" />
            <stop offset="1" stopColor="#2d0510" />
          </linearGradient>
          <linearGradient id="wallRed" x1="0" y1="0" x2="0" y2="1">
            <stop offset="0" stopColor="#b8382f" />
            <stop offset=".6" stopColor="#7c2038" />
            <stop offset="1" stopColor="#6f2a5c" />
          </linearGradient>
          <linearGradient id="wallPurple" x1="0" y1="0" x2="0" y2="1">
            <stop offset="0" stopColor="#7d3fa0" />
            <stop offset="1" stopColor="#a066e4" />
          </linearGradient>
          <linearGradient id="wallLow" x1="0" y1="0" x2="0" y2="1">
            <stop offset="0" stopColor="#41629f" />
            <stop offset=".38" stopColor="#653884" />
            <stop offset=".66" stopColor="#6d1f3c" />
            <stop offset="1" stopColor="#2f0710" />
          </linearGradient>
        </defs>
        <rect width="2880" height="1800" fill="url(#wallLeft)" />
        <rect x="590" y="40" width="2290" height="700" fill="#25255f" />
        <path d="M2640 610Q2760 640 2880 690V880Q2760 830 2640 800Z" fill="url(#wallRed)" />
        <path d="M2640 790Q2760 820 2880 870V1100L2640 1060Z" fill="url(#wallPurple)" />
        <path d="M2640 1050Q2760 1045 2880 1075V1800H2640Z" fill="url(#wallLow)" />
      </Wallpaper>

      <MenuBar>
        <MenuGroup>
          <FaApple size={32} color="#fff" />
          <MenuTitle>Fusion 360</MenuTitle>
          <MenuItem>File</MenuItem>
          <MenuItem>Edit</MenuItem>
          <MenuItem>View</MenuItem>
          <MenuItem>Window</MenuItem>
          <MenuItem>Help</MenuItem>
        </MenuGroup>
        <StatusGroup>
          <StatusSlot>
            <FaDropbox size={36} color="#fff" />
            <StatusBadge>7</StatusBadge>
          </StatusSlot>
          <StatusSlot $gap={40}>
            <SiAdobecreativecloud size={32} color="#fff" />
          </StatusSlot>
          <StatusSlot $gap={41}>
            <svg width="32" height="24" viewBox="0 0 32 24">
              <rect width="32" height="24" fill="#fff" />
              <path d="M0 2H32M0 8H32M0 14H32M0 20H32" stroke="#c5303a" strokeWidth="3.4" />
              <rect width="15" height="13" fill="#2c3a78" />
            </svg>
          </StatusSlot>
          <StatusSlot $gap={29}>
            <FaBluetoothB size={30} color="#fff" />
          </StatusSlot>
          <StatusSlot $gap={37}>
            <svg width="52" height="26" viewBox="0 0 52 26">
              <rect x="1" y="1" width="44" height="24" rx="7" fill="none" stroke="#aaa" strokeWidth="2" />
              <rect x="4" y="4" width="30" height="18" rx="4" fill="#fff" />
              <rect x="47" y="9" width="3" height="8" rx="1.5" fill="#aaa" />
            </svg>
          </StatusSlot>
          <StatusSlot $gap={36}>
            <FaWifi size={30} color="#fff" />
          </StatusSlot>
          <StatusSlot $gap={32}>
            <History size={30} color="#fff" />
          </StatusSlot>
          <StatusSlot $gap={30}>
            <Search size={30} color="#fff" />
          </StatusSlot>
          <StatusSlot $gap={25}>
            <svg width="30" height="30" viewBox="0 0 30 30">
              <rect x="1" y="1" width="28" height="13" rx="6.5" fill="none" stroke="#fff" strokeWidth="2" />
              <circle cx="9" cy="7.5" r="4" fill="#fff" />
              <rect y="16" width="30" height="14" rx="7" fill="#fff" />
              <circle cx="21" cy="23" r="4" fill="#1b1e4e" />
            </svg>
          </StatusSlot>
          <StatusSlot $gap={23}>
            <svg width="30" height="30" viewBox="0 0 30 30">
              <defs>
                <linearGradient id="siri" x1="0" y1="0" x2="1" y2="1">
                  <stop offset="0" stopColor="#e84a7a" />
                  <stop offset=".5" stopColor="#6fd0e8" />
                  <stop offset="1" stopColor="#5a3ac8" />
                </linearGradient>
              </defs>
              <circle cx="15" cy="15" r="15" fill="url(#siri)" />
              <path d="M15 4L17 13L26 15L17 17L15 26L13 17L4 15L13 13Z" fill="#fff" />
            </svg>
          </StatusSlot>
          <Clock>
            Fri Sep 15<ClockGap />11:43 PM
          </Clock>
        </StatusGroup>
      </MenuBar>

      <DesktopIconSpot $left={2722} $top={341}>
        <svg width="104" height="112" viewBox="0 0 104 112">
          <path d="M0 0H90Q96 0 97 6L104 98Q104 112 92 112H0Z" fill="#bfcbd4" stroke="#7d8a94" />
          <path d="M-40 70Q-30 24 40 24H70Q78 24 78 34V60" fill="none" stroke="#8a96a0" strokeWidth="2" />
          <ellipse cx="45" cy="62" rx="22" ry="14" fill="#d0d9e0" stroke="#8a96a0" />
          <path d="M86 8L92 92" stroke="#8a96a0" strokeWidth="2" />
          <rect x="15" y="3" width="50" height="17" fill="#3a3f44" />
          <rect x="41" y="96" width="34" height="11" fill="#2a2e33" />
        </svg>
      </DesktopIconSpot>
      <DesktopIconSpot $left={2722} $top={564}>
        <svg width="86" height="118" viewBox="0 0 86 118">
          <path d="M0 0H56L86 58V118H0Z" fill="#f4f4f4" />
          <path d="M56 0Q60 46 86 58Z" fill="#e2e2e2" />
          <path d="M14 42H60L68 98H12Z" fill="#a7b3bd" stroke="#6a747c" />
          <ellipse cx="38" cy="68" rx="20" ry="9" fill="#c4ced6" />
          <rect x="26" y="88" width="30" height="9" fill="#2c3136" />
          <rect x="18" y="46" width="38" height="7" fill="#3a3f44" />
        </svg>
      </DesktopIconSpot>
      <DesktopIconSpot $left={2722} $top={766}>
        <svg width="90" height="114" viewBox="0 0 90 114">
          <path d="M0 0H76L90 100Q90 114 78 114H0Z" fill="#efefef" />
          <path d="M0 90H86L90 100Q90 114 78 114H0Z" fill="#aeb0b2" />
          <path d="M0 106H84" stroke="#6e7072" strokeWidth="1.5" />
          <path d="M36 44L11 30A29 29 0 0 1 61 30Z" fill="#d4493e" />
          <path d="M36 44L11 30A29 29 0 0 0 36 73Z" fill="#3c9a5a" />
          <path d="M36 44L36 73A29 29 0 0 0 61 30Z" fill="#f3c343" />
          <circle cx="36" cy="44" r="13.5" fill="#fff" />
          <circle cx="36" cy="44" r="10.5" fill="#4b82ee" />
        </svg>
      </DesktopIconSpot>
      <DesktopIconSpot $left={2742} $top={1146}>
        <svg width="91" height="118" viewBox="0 0 91 118">
          <path d="M0 0H60L91 58V114Q91 118 87 118H4Q0 118 0 114Z" fill="#ececec" />
          <path d="M60 0Q64 46 91 58Z" fill="#fff" />
          <g stroke="#8a8a8a" strokeWidth="1.5" strokeDasharray="7 2">
            {[10, 18, 26, 34, 42, 50, 58, 66, 74, 82, 90].map((y) => <path key={y} d={`M8 ${y}H${y < 58 ? 58 : 82}`} />)}
          </g>
          <PageLabel x="45" y="108" fontSize="20" textAnchor="middle">PDF</PageLabel>
        </svg>
      </DesktopIconSpot>
      <DesktopIconSpot $left={2722} $top={1419}>
        <QrBlock />
      </DesktopIconSpot>
      <DesktopLabel $left={2724} $top={233}>ila Vaccine</DesktopLabel>
      <DesktopLabel $left={2724} $top={265}>Card.jpeg</DesktopLabel>
      <DesktopLabel $left={2724} $top={477}>cintosh HD</DesktopLabel>
      <DesktopLabel $left={2724} $top={705}>tivity7.dmg</DesktopLabel>
      <DesktopLabel $left={2724} $top={905}>gle Chrome</DesktopLabel>
      <DesktopLabel $left={2724} $top={1283}>_Resume_20</DesktopLabel>
      <DesktopLabel $left={2779} $top={1317}>3</DesktopLabel>
      <DesktopLabel $left={2724} $top={1552}>een Shot</DesktopLabel>
      <DesktopLabel $left={2724} $top={1584}>...33.23 PM</DesktopLabel>

      <BackWindow>
        <BackHeader>
          <TrafficLight $color="#5f5a5b" />
          <TrafficLight $color="#5f5a5b" />
          <TrafficLight $color="#5f5a5b" />
        </BackHeader>
        <BackTabs>
          <BackFavicon>31</BackFavicon>
          <BackTabDivider />
          <BackLetter>M</BackLetter>
          <BackSpacer />
          <BackButton>
            <svg width="14" height="14" viewBox="0 0 14 14"><path d="M2 1L13 7L2 13Z" fill="#777" /></svg>
          </BackButton>
        </BackTabs>
      </BackWindow>

      <FusionWindow>
        <TitleBar>
          <TrafficLights>
            <TrafficLight $color="#d7d5d7" $edge="#bdbbbd" />
            <TrafficLight $color="#d7d5d7" $edge="#bdbbbd" />
            <TrafficLight $color="#d7d5d7" $edge="#bdbbbd" />
          </TrafficLights>
          <WindowTitle>Autodesk Fusion 360 (Education License)</WindowTitle>
        </TitleBar>

        <TabStrip>
          <QuickTools>
            <GridGlyph />
            <QuickGroup $gap={38}><FileGlyph /><Caret $gap={11} $color="#666" /></QuickGroup>
            <QuickGroup $gap={41}><SaveGlyph /></QuickGroup>
            <QuickGroup $gap={39}><UndoGlyph /><Caret $gap={11} $color="#666" /></QuickGroup>
            <QuickGroup $gap={26}><UndoGlyph $flip color="#8a8a8a" /><Caret $gap={11} $color="#888" /></QuickGroup>
          </QuickTools>
          <HomeTab><HomeGlyph /></HomeTab>
          <DocTab>
            <DocCube />
            <span>pentagon draft 1 v4*</span>
            <DocClose>✕</DocClose>
          </DocTab>
          <DocTab $idle>
            <DocCube a="#a5a5a5" b="#b2b2b2" c="#8f8f8f" />
            <span>Untitled</span>
          </DocTab>
        </TabStrip>

        <Ribbon>
          <DesignBox>DESIGN<Caret $size={5} /></DesignBox>
          <RibbonMain>
            <RibbonTabs>
              {RIBBON_TABS.map((tab, i) => (
                <RibbonTab key={tab} $active={i === 0}>{tab}</RibbonTab>
              ))}
            </RibbonTabs>
            <RibbonGroups>
              <ToolGroup $w={527}>
                <ToolRow $start={8}>
                  <ToolSlot $w={79}><SketchIcon /></ToolSlot>
                  <ToolSlot $w={90}><ToolActive><ExtrudeCube /></ToolActive></ToolSlot>
                  <ToolSlot $w={82}><RevolveIcon /></ToolSlot>
                  <ToolSlot $w={90}><HoleIcon /></ToolSlot>
                  <ToolSlot $w={76}><PatternIcon /></ToolSlot>
                  <ToolSlot $w={100}><FormIcon /></ToolSlot>
                </ToolRow>
                <ToolLabel $shift={-16}>CREATE<Caret /></ToolLabel>
              </ToolGroup>
              <ToolGroup $w={199} $line>
                <ToolRow><AutomateIcon /></ToolRow>
                <ToolLabel>AUTOMATE<Caret /></ToolLabel>
              </ToolGroup>
              <ToolGroup $w={538} $line>
                <ToolRow $start={8}>
                  <ToolSlot $w={90}><PressPullIcon /></ToolSlot>
                  <ToolSlot $w={84}><FilletIcon /></ToolSlot>
                  <ToolSlot $w={88}><ShellIcon /></ToolSlot>
                  <ToolSlot $w={92}><CombineIcon /></ToolSlot>
                  <ToolSlot $w={72}><StackIcon /></ToolSlot>
                  <ToolSlot $w={100}><MoveIcon /></ToolSlot>
                </ToolRow>
                <ToolLabel>MODIFY<Caret /></ToolLabel>
              </ToolGroup>
              <ToolGroup $w={194} $line>
                <ToolRow $start={10}>
                  <ToolSlot $w={88}><NewComponentIcon /></ToolSlot>
                  <ToolSlot $w={84}><JointIcon /></ToolSlot>
                </ToolRow>
                <ToolLabel>ASSEMBLE<Caret /></ToolLabel>
              </ToolGroup>
              <ToolGroup $w={208} $line>
                <ToolRow><PlaneIcon /></ToolRow>
                <ToolLabel>CONSTRUCT<Caret /></ToolLabel>
              </ToolGroup>
              <ToolGroup $w={159} $line>
                <ToolRow $top={17}><MeasureIcon /></ToolRow>
                <ToolLabel>INSPECT<Caret /></ToolLabel>
              </ToolGroup>
              <ToolGroup $w={147} $line>
                <ToolRow $top={0}><PictureIcon /></ToolRow>
                <ToolLabel>INSERT<Caret /></ToolLabel>
              </ToolGroup>
              <ToolGroup $w={168} $line>
                <ToolRow $start={43}><SelectIcon /></ToolRow>
                <ToolLabel $shift={-12}>SELECT<Caret /></ToolLabel>
              </ToolGroup>
            </RibbonGroups>
          </RibbonMain>
        </Ribbon>

        <Canvas>
          <SketchDrawing />

          <BrowserPanel>
            <PanelBar>
              <DoubleArrow back />
              <PanelBarTitle>BROWSER</PanelBarTitle>
              <Pill />
            </PanelBar>
            <Tree>
              <TreeRoot>
                <RootArrow />
                <RootBody>
                  <Eye />
                  <RootName>
                    <svg width="28" height="28" viewBox="0 0 28 28">
                      <path d="M1 6L6 1H26L22 6Z" fill="#fff" stroke="#555" />
                      <path d="M22 6L26 1V22L22 27Z" fill="#bbb" stroke="#555" />
                      <path d="M1 6H22V27H1Z" fill="#d6dae4" stroke="#555" />
                    </svg>
                    <span>pentagon draft 1 v4</span>
                  </RootName>
                  <RadioDot />
                </RootBody>
              </TreeRoot>
              <TreeRow>
                <TreeArrow />
                <TreeBody>
                  <Gear />
                  <TreeText $gap={28}>Document Settings</TreeText>
                </TreeBody>
              </TreeRow>
              <TreeRow>
                <TreeArrow />
                <TreeBody>
                  <Folder />
                  <TreeText $gap={28}>Named Views</TreeText>
                </TreeBody>
              </TreeRow>
              <TreeRow>
                <TreeArrow />
                <TreeBody>
                  <Eye />
                  <Folder />
                  <TreeText $gap={28}>Origin</TreeText>
                </TreeBody>
              </TreeRow>
              <TreeRow>
                <TreeArrow />
                <TreeBody>
                  <Eye />
                  <Folder />
                  <TreeText $gap={28}>Sketches</TreeText>
                  <WavyLine />
                </TreeBody>
              </TreeRow>
            </Tree>
          </BrowserPanel>

          <ViewCube>
            <CubeFace>TOP</CubeFace>
            <AxisLetter $left={1} $top={-28} $color="#7df07d">Y</AxisLetter>
            <AxisLetter $left={98} $top={66} $color="#ff8585">X</AxisLetter>
            <AxisLetter $left={-13} $top={82} $color="#7d7dff">Z</AxisLetter>
          </ViewCube>

          <DimensionBox>
            <DimensionGrip />
            <DimensionField><DimensionValue>0.00 mm</DimensionValue></DimensionField>
            <DimensionMenu>
              <i /><i /><i />
            </DimensionMenu>
          </DimensionBox>

          <ExtrudePanel>
            <ExtrudeHead>
              <Pill />
              <ExtrudeTitle>EXTRUDE</ExtrudeTitle>
              <DoubleArrow />
            </ExtrudeHead>
            <ExtrudeBody>
              <FormRow>
                <FormLabel>Type</FormLabel>
                <TypeButton><ExtrudeCube size={42} /></TypeButton>
                <TypeAlt><TaperGlyph /></TypeAlt>
              </FormRow>
              <FormRow>
                <FormLabel>Profiles</FormLabel>
                <SelectedChip>
                  <CursorGlyph />
                  <span>13 selected</span>
                </SelectedChip>
                <ClearMark>✕</ClearMark>
              </FormRow>
              <FormRow>
                <FormLabel>Start</FormLabel>
                <Dropdown>
                  <DropIcon><StartGlyph /></DropIcon>
                  <span>Profile Plane</span>
                  <DropCaret />
                </Dropdown>
              </FormRow>
              <FormRow>
                <FormLabel>Direction</FormLabel>
                <Dropdown>
                  <DropIcon><DirectionGlyph /></DropIcon>
                  <span>One Side</span>
                  <DropCaret />
                </Dropdown>
              </FormRow>
              <FormRow>
                <FormLabel>Extent Type</FormLabel>
                <Dropdown>
                  <DropIcon><DistanceGlyph /></DropIcon>
                  <span>Distance</span>
                  <DropCaret />
                </Dropdown>
              </FormRow>
              <FormRow>
                <FormLabel>Distance</FormLabel>
                <TextField>0.00 mm</TextField>
              </FormRow>
              <FormRow>
                <FormLabel>Taper Angle</FormLabel>
                <TextField>0.0 deg</TextField>
              </FormRow>
              <FormDivider />
              <FormRow>
                <FormLabel>Operation</FormLabel>
                <Dropdown>
                  <DropIcon><BodyGlyph /></DropIcon>
                  <span>New Body</span>
                  <DropCaret />
                </Dropdown>
              </FormRow>
            </ExtrudeBody>
            <ExtrudeFoot>
              <InfoMark>i</InfoMark>
              <FootButton $disabled>OK</FootButton>
              <FootButton>Cancel</FootButton>
            </ExtrudeFoot>
          </ExtrudePanel>

          <CommentsBar>
            <PanelBarTitle>COMMENTS</PanelBarTitle>
            <Pill plus />
          </CommentsBar>

          <NavBar>
            <NavItem $gap={0}><OrbitGlyph /><Caret $size={5} $gap={11} /></NavItem>
            <NavItem $gap={15}><LookGlyph /></NavItem>
            <NavItem $gap={23}><HandGlyph /></NavItem>
            <NavItem $gap={22}><ZoomGlyph /></NavItem>
            <NavItem $gap={21}><ZoomGlyph fit /><Caret $size={5} $gap={13} /></NavItem>
            <NavItem $gap={13}><DisplayGlyph /><Caret $size={5} $gap={5} /></NavItem>
            <NavItem $gap={16}><GridStackGlyph /><Caret $size={5} $gap={8} /></NavItem>
            <NavItem $gap={16}><PanesGlyph /><Caret $size={5} $gap={8} /></NavItem>
          </NavBar>

          <ProfileCount>13 Profiles</ProfileCount>
        </Canvas>

        <Timeline>
          <TimelineControls>
            <svg width="224" height="30" viewBox="0 0 224 30" fill="#555">
              <path d="M0 0H3V30H0ZM24 0V30L4 15Z" />
              <path d="M49 15L62 2V28ZM64 8H70V22H64Z" />
              <path d="M100 0L124 15L100 30Z" />
              <path d="M150 8H156V22H150ZM158 2L172 15L158 28Z" />
              <path d="M201 0L221 15L201 30ZM221 0H224V30H221Z" />
            </svg>
          </TimelineControls>
          <TimelineFeature>
            <svg width="60" height="66" viewBox="0 0 60 66">
              <rect x="0" y="3" width="47" height="49" rx="3" fill="#0696d7" />
              <path d="M12 14H30V30L24 40H12Z" fill="none" stroke="#2a6a9a" strokeWidth="1.5" />
              <path d="M30 34L38 30V38L32 44Z" fill="#f4c130" />
              <path d="M32 28L38 24V30L33 33Z" fill="#e84a3a" />
              <rect x="25" y="52" width="2" height="12" fill="#c4c4c4" />
              <path d="M36 0H60V12L50 26V64H47V26L36 12Z" fill="#555" />
            </svg>
          </TimelineFeature>
          <TimelineSpacer />
          <Gear size={34} color="#7d7d7d" />
        </Timeline>
      </FusionWindow>

      <Notification>
        <NoteHead>
          <NoteApp>
            <svg width="30" height="32" viewBox="0 0 30 32">
              <rect width="30" height="32" rx="7" fill="#eee" />
              <circle cx="15" cy="16" r="12" fill="#1e6a62" />
              <path d="M15 8V17H9" fill="none" stroke="#d6ece8" strokeWidth="2" />
            </svg>
          </NoteApp>
          <NoteTitle>NO BACKUPS FOR 25 DAYS</NoteTitle>
          <NoteTime>12:12 PM</NoteTime>
        </NoteHead>
        <NoteBody>Connect to a power outlet while your backup disk is available.</NoteBody>
      </Notification>

      <Dock>
        {DOCK.map((item, i) =>
          item.sep ? (
            <DockSeparator key={i} />
          ) : (
            <DockSlot key={item.id}>
              <DockArt $lift={item.lift}>
                <item.Icon />
                {item.badge && <DockBadge>{item.badge}</DockBadge>}
              </DockArt>
              <DockDot $on={item.dot} />
            </DockSlot>
          )
        )}
      </Dock>
    </Desktop>
  );
};

// deterministic pattern standing in for the QR code on the desktop
const QrBlock = () => {
  const cells = [];
  for (let y = 0; y < 30; y++) {
    for (let x = 0; x < 27; x++) {
      if ((x * x * 3 + y * 7 + x * y * 5 + y * y) % 7 < 3) cells.push(<rect key={`${x}-${y}`} x={x * 3} y={8 + y * 3} width="3" height="3" />);
    }
  }
  return (
    <svg width="87" height="108" viewBox="0 0 87 108">
      <rect width="87" height="108" fill="#fff" />
      <g fill="#111">{cells}</g>
      <rect x="54" y="6" width="24" height="24" fill="#fff" stroke="#111" strokeWidth="3" />
      <rect x="62" y="14" width="8" height="8" fill="#111" />
    </svg>
  );
};

export default App;

const GlobalStyle = createGlobalStyle`
  html, body {
    margin: 0;
    padding: 0;
    background: #2d0510;
  }
  * {
    box-sizing: border-box;
  }
`;

const Desktop = styled.div`
  position: relative;
  width: 2880px;
  height: 1800px;
  overflow: hidden;
  font-family: Inter, 'Liberation Sans', sans-serif;
`;

const Wallpaper = styled.svg`
  position: absolute;
  inset: 0;
  width: 100%;
  height: 100%;
`;

const MenuBar = styled.div`
  position: relative;
  z-index: 5;
  display: flex;
  justify-content: space-between;
  align-items: center;
  height: 48px;
  padding: 0 37px 0 42px;
  background: linear-gradient(90deg, #284f75 0, #21335f 420px, #1b1e4e 900px, #1b1d4e 100%);
  color: #fff;
  font-size: 26px;
`;

const MenuGroup = styled.div`
  display: flex;
  align-items: center;
  gap: 41px;

  & > svg {
    margin-right: -1px;
  }
`;

const MenuTitle = styled.span`
  font-weight: 700;
  margin-right: 3px;
`;

const MenuItem = styled.span`
  font-weight: 400;
`;

const StatusGroup = styled.div`
  display: flex;
  align-items: center;
`;

const StatusSlot = styled.div`
  position: relative;
  display: flex;
  justify-content: center;
  align-items: center;
  width: 40px;
  margin-left: ${({ $gap }) => $gap ?? 0}px;
`;

const StatusBadge = styled.span`
  position: absolute;
  left: 0;
  top: 4px;
  width: 22px;
  height: 30px;
  border-radius: 50%;
  background: #e8502f;
  color: #fff;
  font-size: 18px;
  font-weight: 600;
  line-height: 30px;
  text-align: center;
`;

const Clock = styled.div`
  width: 283px;
  text-align: right;
  font-size: 26.5px;
  white-space: nowrap;
`;

const ClockGap = styled.span`
  display: inline-block;
  width: 24px;
`;

const DesktopIconSpot = styled.div`
  position: absolute;
  left: ${({ $left }) => $left}px;
  top: ${({ $top }) => $top}px;
  line-height: 0;
  filter: drop-shadow(0 2px 3px rgba(0, 0, 0, 0.3));
`;

const PageLabel = styled.text`
  font-family: 'Liberation Sans', sans-serif;
  fill: #7b7b7b;
`;

const DesktopLabel = styled.div`
  position: absolute;
  left: ${({ $left }) => $left}px;
  top: ${({ $top }) => $top}px;
  color: #fff;
  font-family: Inter, 'Liberation Sans', sans-serif;
  font-size: 25px;
  font-weight: 600;
  line-height: 30px;
  white-space: nowrap;
  text-shadow: 0 2px 4px rgba(0, 0, 0, 0.7);
`;

const BackWindow = styled.div`
  position: absolute;
  left: 74px;
  top: 139px;
  width: 2648px;
  height: 1624px;
  display: flex;
  flex-direction: column;
  border-radius: 22px;
  overflow: hidden;
  background: #fff;
  box-shadow: 0 0 0 2px #0c0c0c;
`;

const BackHeader = styled.div`
  display: flex;
  align-items: center;
  gap: 19px;
  height: 105px;
  padding: 0 0 0 40px;
  background: #2a2628;
`;

const BackTabs = styled.div`
  display: flex;
  align-items: center;
  height: 58px;
  border-top: 2px solid #0a0a0a;
  border-bottom: 2px solid #0a0a0a;
  background: #161416;
`;

const BackFavicon = styled.div`
  width: 34px;
  height: 32px;
  margin-left: 19px;
  border-radius: 5px;
  background: #777;
  color: #2a2a2a;
  font-size: 16px;
  line-height: 32px;
  text-align: center;
`;

const BackTabDivider = styled.div`
  width: 2px;
  height: 100%;
  margin-left: 18px;
  background: #3a3a3a;
`;

const BackLetter = styled.span`
  margin-left: 56px;
  color: #555;
  font-size: 40px;
  font-weight: 700;
`;

const BackSpacer = styled.div`
  flex: 1;
`;

const BackButton = styled.div`
  display: flex;
  justify-content: center;
  align-items: center;
  width: 40px;
  height: 34px;
  margin-right: 50px;
  border: 3px solid #4a4a4a;
  border-radius: 6px;
  background: #333;
`;

const TrafficLight = styled.span`
  width: 24px;
  height: 24px;
  border-radius: 50%;
  background: ${({ $color }) => $color};
  border: 1px solid ${({ $edge, $color }) => $edge ?? $color};
`;

const FusionWindow = styled.div`
  position: absolute;
  left: 240px;
  top: 52px;
  z-index: 2;
  width: 2400px;
  height: 1618px;
  display: flex;
  flex-direction: column;
  border-radius: 22px 22px 24px 24px;
  overflow: hidden;
  box-shadow: 0 0 60px rgba(0, 0, 0, 0.35);
`;

const TitleBar = styled.div`
  position: relative;
  display: flex;
  justify-content: center;
  align-items: center;
  flex: none;
  height: 56px;
  background: #f1f0f2;
  border-bottom: 2px solid #b6b6b6;
`;

const TrafficLights = styled.div`
  position: absolute;
  left: 16px;
  top: 16px;
  display: flex;
  gap: 16px;
`;

const WindowTitle = styled.div`
  color: #3b3b3b;
  font-size: 26.5px;
  font-weight: 600;
  letter-spacing: 0.2px;
`;

const TabStrip = styled.div`
  display: flex;
  flex: none;
  height: 64px;
  padding-top: 8px;
  background: #cdcdcd;
`;

const QuickTools = styled.div`
  display: flex;
  align-items: center;
  width: 388px;
  padding-left: 18px;
`;

const QuickGroup = styled.div`
  display: flex;
  align-items: center;
  margin-left: ${({ $gap }) => $gap}px;
`;

const HomeTab = styled.div`
  display: flex;
  justify-content: center;
  align-items: flex-end;
  width: 78px;
  margin-right: 7px;
  padding-bottom: 14px;
  border-radius: 8px 8px 0 0;
  background: #b9b9b9;
`;

const DocTab = styled.div`
  position: relative;
  display: flex;
  justify-content: center;
  align-items: center;
  gap: 10px;
  width: ${({ $idle }) => ($idle ? '960px' : '741px')};
  margin-right: 9px;
  border-radius: 8px 8px 0 0;
  background: ${({ $idle }) => ($idle ? '#b9b9b9' : '#f4f4f4')};
  color: ${({ $idle }) => ($idle ? '#5a5a5a' : '#333')};
  font-family: 'Open Sans', sans-serif;
  font-size: 25px;
  padding-right: ${({ $idle }) => ($idle ? '242px' : '18px')};
`;

const DocClose = styled.span`
  position: absolute;
  right: 14px;
  top: 12px;
  color: #555;
  font-size: 24px;
`;

const Ribbon = styled.div`
  position: relative;
  display: flex;
  flex: none;
  height: 169px;
  padding: 21px 0 0 24px;
  background: #f2f2f2;

  &::after {
    content: '';
    position: absolute;
    left: 0;
    right: 6px;
    bottom: 5px;
    height: 2px;
    background: #d2d2d2;
  }
`;

const DesignBox = styled.div`
  display: flex;
  justify-content: center;
  align-items: center;
  width: 218px;
  height: 121px;
  border: 2px solid #d0d0d0;
  border-radius: 8px;
  color: #444;
  font-family: 'Open Sans', sans-serif;
  font-size: 23.5px;
  font-weight: 600;
`;

const RibbonMain = styled.div`
  display: flex;
  flex-direction: column;
  margin: -12px 0 0 18px;
`;

const RibbonTabs = styled.div`
  display: flex;
  gap: 89.5px;
  height: 44px;
  padding-left: 40px;
`;

const RibbonTab = styled.span`
  position: relative;
  height: 22px;
  margin-top: 1px;
  color: ${({ $active }) => ($active ? '#0696d7' : '#333')};
  font-family: 'Open Sans', sans-serif;
  font-size: 22.6px;
  line-height: 22px;
  white-space: nowrap;

  ${({ $active }) =>
    $active &&
    `
    &::after {
      content: '';
      position: absolute;
      left: -23px;
      right: -26px;
      top: 31px;
      height: 6px;
      background: #0696d7;
    }
  `}
`;

const RibbonGroups = styled.div`
  display: flex;
  height: 103px;
`;

const ToolGroup = styled.div`
  display: flex;
  flex: none;
  flex-direction: column;
  align-items: center;
  width: ${({ $w }) => $w}px;
  border-left: ${({ $line }) => ($line ? '2px solid #cfcfcf' : 'none')};
`;

const ToolRow = styled.div`
  display: flex;
  align-self: ${({ $start }) => ($start !== undefined ? 'flex-start' : 'center')};
  align-items: ${({ $top }) => ($top !== undefined ? 'flex-start' : 'center')};
  height: 72px;
  padding-left: ${({ $start }) => $start ?? 0}px;
  padding-top: ${({ $top }) => $top ?? 0}px;
`;

const ToolSlot = styled.div`
  display: flex;
  flex: none;
  justify-content: center;
  width: ${({ $w }) => $w}px;
`;

const ToolActive = styled.div`
  display: flex;
  justify-content: center;
  align-items: center;
  width: 76px;
  height: 76px;
  margin-top: -6px;
  background: #0696d7;
`;

const ToolLabel = styled.div`
  margin: 5px 0 0 ${({ $shift }) => $shift ?? 0}px;
  color: #444;
  font-family: 'Open Sans', sans-serif;
  font-size: 22.6px;
  line-height: 28px;
  white-space: nowrap;

  & > span {
    vertical-align: middle;
  }
`;

const Canvas = styled.div`
  position: relative;
  flex: 1;
  background-color: #fff;
  background-image: linear-gradient(to right, #dcdcdc 1px, transparent 1px),
    linear-gradient(to bottom, #e2e2e2 1px, transparent 1px),
    linear-gradient(to right, #f1f1f1 1px, transparent 1px),
    linear-gradient(to bottom, #f1f1f1 1px, transparent 1px);
  background-size: 376.5px 100%, 100% 376.5px, 75.3px 100%, 100% 75.3px;
  background-position: 98.5px 0, 0 295px, 23.2px 0, 0 69.1px;
`;

const SketchSvg = styled.svg`
  position: absolute;
  inset: 0;
  width: 100%;
  height: 100%;
`;

const PanelBar = styled.div`
  display: flex;
  align-items: center;
  width: 598px;
  height: 49px;
  padding: 0 23px 0 10px;
  background: #f0f0f0;
  border: 1px solid #cfcfcf;
  border-bottom: 2px solid #cdcdcd;
`;

const PanelBarTitle = styled.span`
  flex: 1;
  margin-left: 20px;
  color: #555;
  font-family: 'Open Sans', sans-serif;
  font-size: 21px;
`;

const BrowserPanel = styled.div`
  position: absolute;
  left: 8px;
  top: 9px;
`;

const Tree = styled.div`
  display: flex;
  flex-direction: column;
  gap: 8px;
  margin-top: 12px;
  color: #333;
  font-family: 'DejaVu Sans', sans-serif;
  font-size: 21px;
`;

const TreeRoot = styled.div`
  display: flex;
  align-items: center;
  height: 38px;
  margin-bottom: 2px;
  padding-left: 37px;
`;

const RootArrow = styled.span`
  width: 14px;
  height: 14px;
  margin-right: 21px;
  background: linear-gradient(135deg, #fff 30%, #111);
  clip-path: polygon(100% 0, 100% 100%, 0 100%);
`;

const RootBody = styled.div`
  display: flex;
  align-items: center;
  width: 407px;
  height: 38px;
  padding-left: 6px;
  background: #f2f2f2;
`;

const RootName = styled.div`
  display: flex;
  align-items: center;
  width: 308px;
  height: 32px;
  margin-left: 12px;
  padding-left: 8px;
  background: #999;
  color: #fff;
  font-weight: 700;

  & > span {
    margin-left: 30px;
    white-space: nowrap;
    font-size: 20px;
  }
`;

const RadioDot = styled.span`
  width: 26px;
  height: 26px;
  margin-left: 9px;
  border-radius: 50%;
  border: 2px solid #555;
  background: radial-gradient(circle, #333 0 5px, #e6e8f0 6px);
`;

const TreeRow = styled.div`
  display: flex;
  align-items: center;
  height: 40px;
  padding-left: 74px;
`;

const TreeBody = styled.div`
  position: relative;
  display: flex;
  align-items: center;
  gap: 18px;
  height: 40px;
  margin-left: 22px;
  padding: 0 20px 0 6px;
  background: #f2f2f2;
`;

const TreeText = styled.span`
  margin-left: ${({ $gap }) => $gap - 18}px;
  white-space: nowrap;
`;

const WavyLine = styled.span`
  position: absolute;
  left: 50px;
  right: 6px;
  bottom: 2px;
  height: 6px;
  background: repeating-linear-gradient(120deg, #6a86b4 0 3px, transparent 3px 10px);
`;

const ViewCube = styled.div`
  position: absolute;
  left: 2244px;
  top: 66px;
  display: flex;
  justify-content: center;
  align-items: center;
  width: 91px;
  height: 91px;
  border: 1.5px solid #b4b4b4;
  background: #efefef;
  box-shadow: 0 4px 14px rgba(0, 0, 0, 0.22);
`;

const CubeFace = styled.div`
  display: flex;
  justify-content: center;
  align-items: center;
  width: 57px;
  height: 57px;
  background: #e4e5e9;
  color: #9b9ca1;
  font-family: 'Open Sans', sans-serif;
  font-size: 23px;
  font-weight: 700;
`;

const AxisLetter = styled.span`
  position: absolute;
  left: ${({ $left }) => $left}px;
  top: ${({ $top }) => $top}px;
  color: ${({ $color }) => $color};
  font-family: 'Open Sans', sans-serif;
  font-size: 25px;
  line-height: 24px;
`;

const DimensionBox = styled.div`
  position: absolute;
  left: 1196px;
  top: 553px;
  display: flex;
  align-items: center;
  width: 230px;
  height: 43px;
  background: #f0f0f0;
`;

const DimensionGrip = styled.div`
  width: 28px;
  height: 100%;
  border-right: 2px solid #c2c2c2;
  background: radial-gradient(circle, #bbb 1px, transparent 1.5px) 6px 2px / 6px 6px;
  background-clip: content-box;
  padding: 2px 6px;
`;

const DimensionField = styled.div`
  display: flex;
  justify-content: center;
  align-items: center;
  width: 154px;
  height: 100%;
  border: 2px solid #c8c8c8;
  background: #fff;
`;

const DimensionValue = styled.span`
  background: #a9cbf9;
  color: #111;
  font-family: 'DejaVu Sans', sans-serif;
  font-size: 21.5px;
  line-height: 24px;
`;

const DimensionMenu = styled.div`
  display: flex;
  flex: 1;
  flex-direction: column;
  justify-content: center;
  align-items: center;
  gap: 4px;

  & > i {
    width: 6px;
    height: 6px;
    border-radius: 50%;
    background: #888;
  }
`;

const ExtrudePanel = styled.div`
  position: absolute;
  right: 8px;
  top: 425px;
  display: flex;
  flex-direction: column;
  width: 499px;
  height: 625px;
  background: #f1f1f1;
  border: 1px solid #cbcbcb;
  border-right: 3px solid #cbcbcb;
  font-family: 'DejaVu Sans', sans-serif;
  font-size: 21px;
  color: #3d3d3d;
`;

const ExtrudeHead = styled.div`
  display: flex;
  flex: none;
  align-items: center;
  height: 48px;
  padding: 0 9px 0 23px;
  border-bottom: 2px solid #cbcbcb;
`;

const ExtrudeTitle = styled.span`
  flex: 1;
  margin-left: 9px;
  color: #5a5a5a;
  font-size: 20px;
`;

const ExtrudeBody = styled.div`
  display: flex;
  flex: 1;
  flex-direction: column;
  gap: 6px;
  padding: 4px 0 0 24px;
`;

const FormRow = styled.div`
  display: flex;
  flex: none;
  align-items: center;
  height: 54px;
`;

const FormLabel = styled.span`
  width: 157px;
`;

const TypeButton = styled.div`
  display: flex;
  justify-content: center;
  align-items: center;
  width: 46px;
  height: 54px;
  border-radius: 1px;
  background: #0696d7;
`;

const TypeAlt = styled.div`
  display: flex;
  margin-left: 19px;
`;

const SelectedChip = styled.div`
  display: flex;
  align-items: center;
  width: 174px;
  height: 54px;
  padding-left: 14px;
  border-radius: 1px;
  background: #0696d7;
  color: #fff;
  white-space: nowrap;

  & > span {
    margin-left: 8px;
  }
`;

const ClearMark = styled.span`
  margin-left: 21px;
  color: #444;
  font-size: 24px;
`;

const Dropdown = styled.div`
  position: relative;
  display: flex;
  align-items: center;
  width: 252px;
  height: 53px;
  border: 3px solid #cdcdcd;
  background: #fff;
`;

const DropIcon = styled.span`
  display: flex;
  justify-content: center;
  width: 44px;
  margin-right: 1px;
`;

const DropCaret = styled.span`
  position: absolute;
  right: 8px;
  top: 20px;
  border-left: 6px solid transparent;
  border-right: 6px solid transparent;
  border-top: 7px solid #333;
`;

const TextField = styled.div`
  display: flex;
  align-items: center;
  width: 250px;
  height: 51px;
  margin-left: 1px;
  padding-left: 5px;
  border: 3px solid #cdcdcd;
  background: #fff;
`;

const FormDivider = styled.div`
  flex: none;
  width: 468px;
  height: 2px;
  margin: 9px 0 4px -21px;
  background: #c9c9c9;
`;

const ExtrudeFoot = styled.div`
  display: flex;
  flex: none;
  align-items: center;
  height: 72px;
  padding-left: 30px;
  border-top: 2px solid #cbcbcb;
`;

const InfoMark = styled.span`
  display: flex;
  justify-content: center;
  align-items: center;
  width: 24px;
  height: 24px;
  border-radius: 50%;
  background: #111;
  color: #fff;
  font-family: 'Liberation Serif', serif;
  font-size: 20px;
  font-weight: 700;
`;

const FootButton = styled.div`
  display: flex;
  justify-content: center;
  align-items: center;
  width: 120px;
  height: 37px;
  margin-left: ${({ $disabled }) => ($disabled ? '144px' : '36px')};
  border: 2px solid #c4c4c4;
  background: #e6e6e6;
  color: ${({ $disabled }) => ($disabled ? '#bdbdbd' : '#444')};
`;

const CommentsBar = styled(PanelBar)`
  position: absolute;
  left: 8px;
  bottom: 9px;
  padding-left: 30px;
`;

const NavBar = styled.div`
  position: absolute;
  left: 965px;
  bottom: 12px;
  display: flex;
  align-items: center;
  width: 473px;
  height: 48px;
  padding-left: 7px;
  background: #f2f2f2;
`;

const NavItem = styled.div`
  display: flex;
  align-items: center;
  margin-left: ${({ $gap }) => $gap}px;
  line-height: 0;
`;

const ProfileCount = styled.div`
  position: absolute;
  right: 35px;
  bottom: 14px;
  color: #333;
  font-family: 'DejaVu Sans', sans-serif;
  font-size: 20px;
  font-weight: 700;
`;

const Timeline = styled.div`
  display: flex;
  flex: none;
  align-items: center;
  height: 100px;
  padding: 0 24px 0 22px;
  border-top: 3px solid #d0d0d0;
  background: linear-gradient(90deg, #d0d0d0 270px, #e2e2e2 270px, #e2e2e2 2309px, #d0d0d0 2309px) top / 100% 3px no-repeat,
    linear-gradient(#f2f2f2 30%, #d6d6d6);
`;

const TimelineControls = styled.div`
  display: flex;
  line-height: 0;
`;

const TimelineFeature = styled.div`
  margin-left: 38px;
  line-height: 0;
`;

const TimelineSpacer = styled.div`
  flex: 1;
`;

const Notification = styled.div`
  position: absolute;
  left: 2161px;
  top: 82px;
  z-index: 4;
  width: 687px;
  height: 148px;
  padding: 20px 24px 0 20px;
  border: 2px solid #8d8b8d;
  border-radius: 24px;
  background: linear-gradient(90deg, #6f6d6f 0, #737173 65%, #565357 88%, #5a575c 100%);
  box-shadow: 0 6px 20px rgba(0, 0, 0, 0.3);
  color: #f2f2f2;
`;

const NoteHead = styled.div`
  display: flex;
  align-items: center;
  height: 32px;
`;

const NoteApp = styled.span`
  display: flex;
  margin-right: 12px;
`;

const NoteTitle = styled.span`
  flex: 1;
  font-size: 23px;
  color: #e4e4e4;
  white-space: nowrap;
`;

const NoteTime = styled.span`
  font-size: 22px;
  color: #d8d8d8;
`;

const NoteBody = styled.div`
  margin-top: 8px;
  font-size: 25.4px;
  line-height: 33px;
`;

const Dock = styled.div`
  position: absolute;
  left: 214px;
  top: 1673px;
  z-index: 3;
  display: flex;
  width: 2452px;
  height: 117px;
  padding: 16px 0 0 3px;
  border: 2px solid #66605f;
  border-radius: 28px;
  background: linear-gradient(#8b8386, #746a6c);
`;

const DockSlot = styled.div`
  display: flex;
  flex: none;
  flex-direction: column;
  align-items: center;
  width: 98px;
`;

const DockArt = styled.div`
  position: relative;
  display: flex;
  justify-content: center;
  align-items: flex-start;
  width: 76px;
  height: 76px;

  & > svg {
    flex: none;
    overflow: visible;
    margin-top: ${({ $lift }) => -($lift ?? 0)}px;
  }
`;

const DockBadge = styled.span`
  position: absolute;
  right: -11px;
  top: -9px;
  min-width: 35px;
  height: 35px;
  padding: 0 6px;
  border-radius: 18px;
  background: #e84c3d;
  color: #fff;
  font-size: 20px;
  line-height: 35px;
  text-align: center;
`;

const DockDot = styled.span`
  width: 6px;
  height: 7px;
  margin-top: 11px;
  border-radius: 50%;
  background: ${({ $on }) => ($on ? '#f2e6ea' : 'transparent')};
`;

const DockSeparator = styled.div`
  flex: none;
  width: 2px;
  height: 84px;
  margin: -1px 21px 0 23px;
  background: #a8a2a3;
`;

const TileText = styled.text`
  font-family: Inter, 'Liberation Sans', sans-serif;
`;
